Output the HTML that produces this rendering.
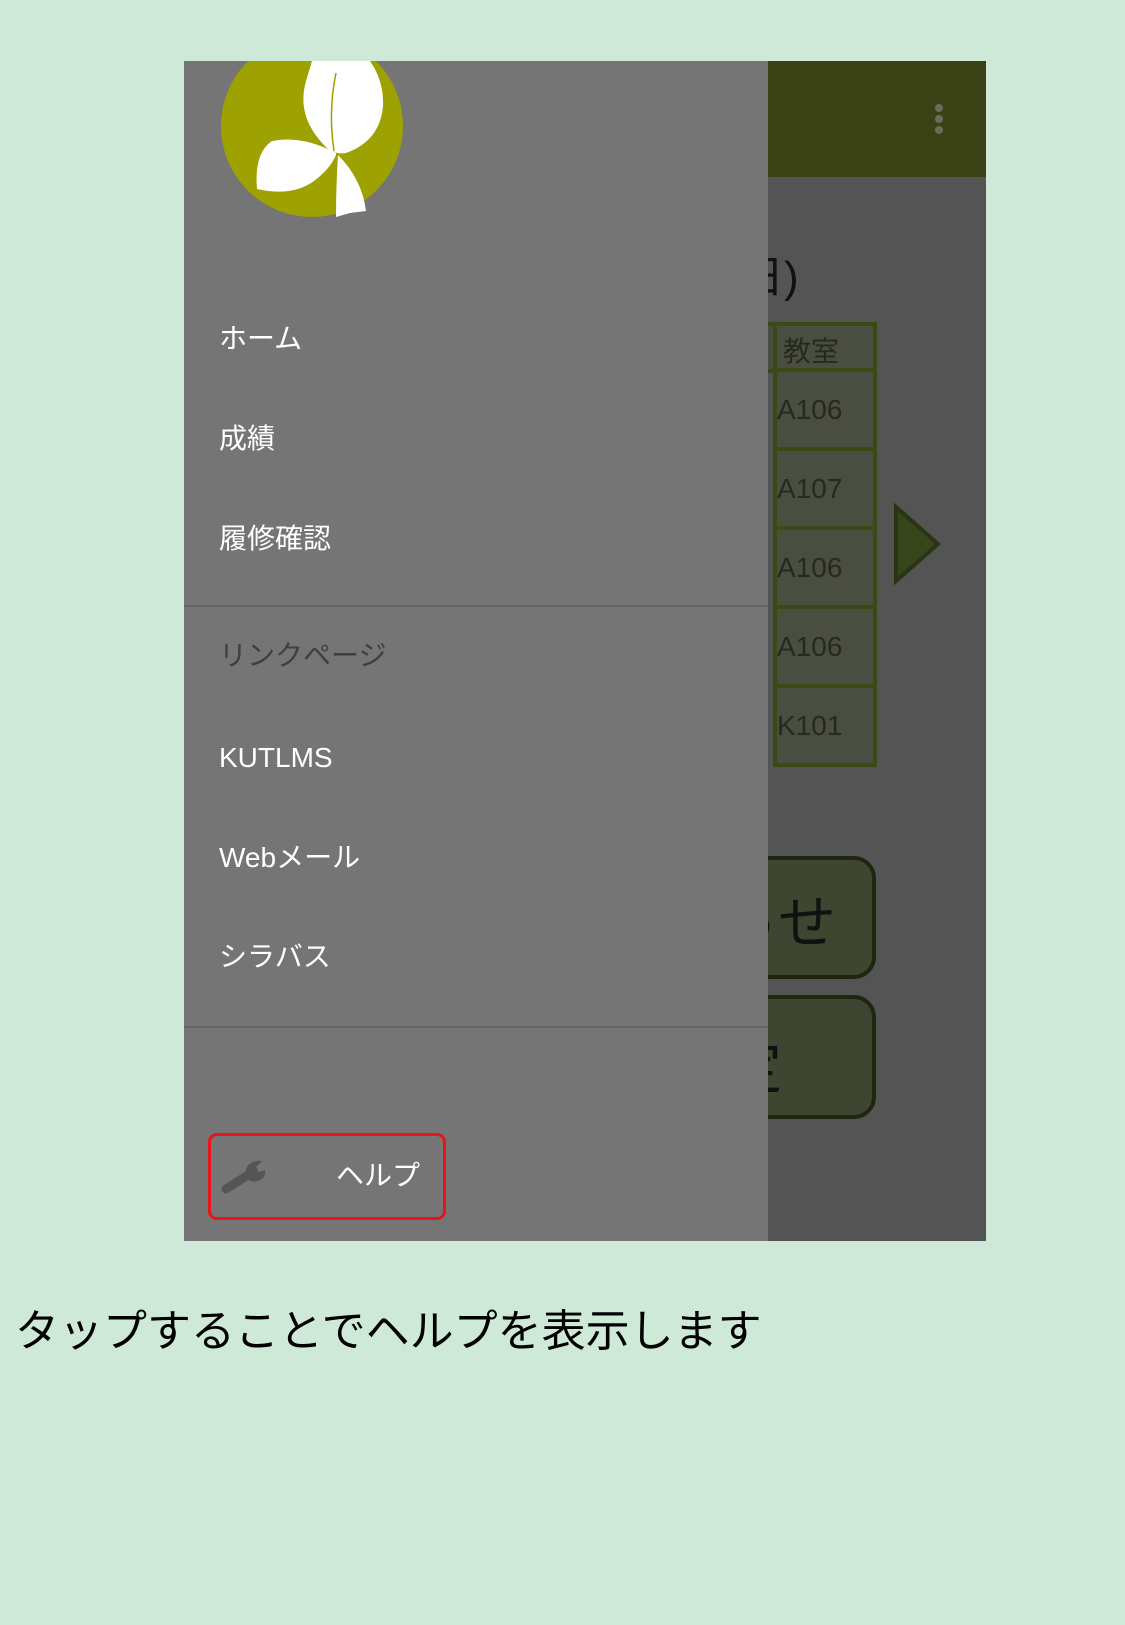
<!DOCTYPE html>
<html><head><meta charset="utf-8"><style>
*{margin:0;padding:0;box-sizing:border-box}
body{width:1125px;height:1625px;background:#cfe9d8;position:relative;overflow:hidden;font-family:"Liberation Sans","Noto Sans CJK JP",sans-serif}
.abs{position:absolute}
.screen{left:184px;top:61px;width:802px;height:1180px;background:#545454;overflow:hidden}
.bar{left:0;top:0;width:802px;height:116px;background:#3a4215}
.dot{width:8px;height:8px;border-radius:50%;background:#6c6c5a;left:751px}
.drawer{left:0;top:0;width:584px;height:1180px;background:#757575}
.item{left:35px;font-size:28px;color:#fff;line-height:1}
.div{left:0;width:584px;height:2px;background:#666}
.cell{background:#4a4e40;border:4px solid #3a4a15;color:#262a1e;font-size:28px}
.btn{background:#3e4531;border:4px solid #1e2610;border-radius:22px}
</style></head><body>
<div class="abs screen">
  <div class="abs bar"></div>
  <div class="abs dot" style="top:43px"></div>
  <div class="abs dot" style="top:54px"></div>
  <div class="abs dot" style="top:65px"></div>
  <div class="abs" style="left:556px;top:180px;font-size:44px;color:#111">日)</div>
  <div class="abs cell" style="left:540px;top:261px;width:153px;height:51px"></div>
  <div class="abs cell" style="left:589px;top:261px;width:104px;height:51px;padding:4px 0 0 6px">教室</div>
  <div class="abs cell" style="left:589px;top:307px;width:104px;height:83px;padding:22px 0 0 0">A106</div>
  <div class="abs cell" style="left:589px;top:386px;width:104px;height:83px;padding:22px 0 0 0">A107</div>
  <div class="abs cell" style="left:589px;top:465px;width:104px;height:83px;padding:22px 0 0 0">A106</div>
  <div class="abs cell" style="left:589px;top:544px;width:104px;height:83px;padding:22px 0 0 0">A106</div>
  <div class="abs cell" style="left:589px;top:623px;width:104px;height:83px;padding:22px 0 0 0">K101</div>
  <svg class="abs" style="left:708px;top:442px" width="50" height="82"><polygon points="4,4 46,41 4,78" fill="#37451a" stroke="#2a3512" stroke-width="4"/></svg>
  <div class="abs btn" style="left:520px;top:795px;width:172px;height:123px"></div>
  <div class="abs" style="left:536px;top:815px;font-size:58px;color:#111">っせ</div>
  <div class="abs btn" style="left:520px;top:934px;width:172px;height:124px"></div>
  <div class="abs" style="left:540px;top:960px;font-size:58px;color:#111">定</div>
  <div class="abs drawer">
    <svg class="abs" style="left:0;top:0" width="584" height="170">
      <circle cx="128" cy="65" r="91" fill="#9da200"/>
      <path d="M128,0 L186,0 Q200,20 199,45 Q196,80 162,92 Q148,94 140,84 Q112,55 122,20 Z" fill="#fff"/>
      <path d="M152,12 Q144,50 150,90" stroke="#9da200" stroke-width="1.5" fill="none"/>
      <path d="M152,92 Q118,74 88,80 Q70,92 73,128 Q108,136 130,120 Q146,108 152,94 Z" fill="#fff"/>
      <path d="M154,94 Q178,118 182,150 L166,152 L152,156 Q152,126 154,94 Z" fill="#fff"/>
    </svg>
    <div class="abs item" style="top:264px">ホーム</div>
    <div class="abs item" style="top:364px">成績</div>
    <div class="abs item" style="top:464px">履修確認</div>
    <div class="abs div" style="top:544px"></div>
    <div class="abs item" style="top:581px;color:#3f3f3f">リンクページ</div>
    <div class="abs item" style="top:683px">KUTLMS</div>
    <div class="abs item" style="top:783px">Webメール</div>
    <div class="abs item" style="top:882px">シラバス</div>
    <div class="abs div" style="top:965px"></div>
    <div class="abs" style="left:24px;top:1072px;width:238px;height:87px;border:3px solid #e8141a;border-radius:9px"></div>
    <svg class="abs" style="left:36px;top:1095px" width="50" height="40" viewBox="0 0 50 40">
      <path d="M6,33 L28,19" stroke="#555" stroke-width="9" stroke-linecap="round"/>
      <path d="M26,20 Q24,10 33,6 Q38,4 42,5 L36,11 L39,16 L45,14 Q46,22 38,25 Q32,27 28,23 Z" fill="#555"/>
    </svg>
    <div class="abs item" style="left:152px;top:1101px">ヘルプ</div>
  </div>
</div>
<div class="abs" style="left:15px;top:1306px;font-size:44px;color:#000;white-space:nowrap;line-height:1.2">タップすることでヘルプを表示します</div>
</body></html>
